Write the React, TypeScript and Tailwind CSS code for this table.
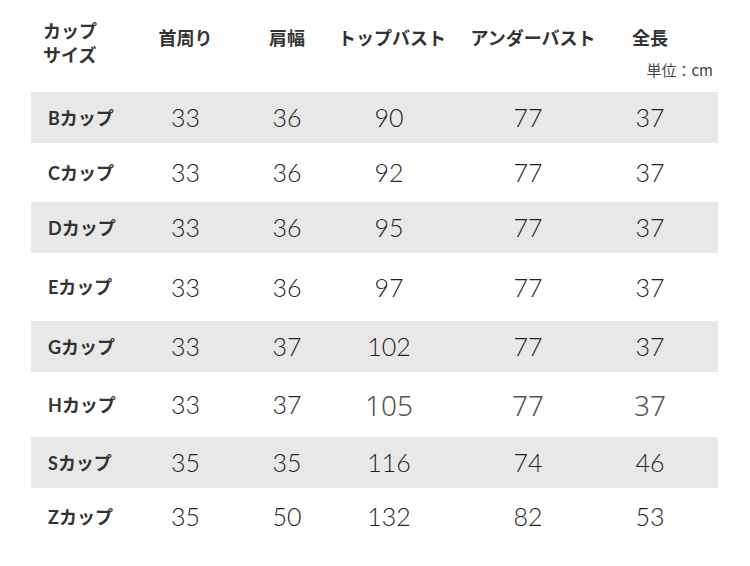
const cols = "grid grid-cols-[104px_101px_102px_102px_176px_68px_1fr]";

type Row = {
  cup: string;
  values: string[];
  shaded: boolean;
  height: string;
  alt?: boolean;
};

const rows: Row[] = [
  { cup: "B", values: ["33", "36", "90", "77", "37"], shaded: true, height: "h-[51px]" },
  { cup: "C", values: ["33", "36", "92", "77", "37"], shaded: false, height: "h-[59px]" },
  { cup: "D", values: ["33", "36", "95", "77", "37"], shaded: true, height: "h-[51px]" },
  { cup: "E", values: ["33", "36", "97", "77", "37"], shaded: false, height: "h-[68px]" },
  { cup: "G", values: ["33", "37", "102", "77", "37"], shaded: true, height: "h-[51px]" },
  { cup: "H", values: ["33", "37", "105", "77", "37"], shaded: false, height: "h-[65px]", alt: true },
  { cup: "S", values: ["35", "35", "116", "74", "46"], shaded: true, height: "h-[51px]" },
  { cup: "Z", values: ["35", "50", "132", "82", "53"], shaded: false, height: "h-[57px]" },
];

const jp = "font-['Noto_Sans_CJK_JP','Noto_Sans',sans-serif]";

export default function App() {
  return (
    <div className="w-[750px] h-[566px] bg-white overflow-hidden">
      <div className="ml-[31px] w-[687px] pt-[15px]">
        {/* header */}
        <div
          className={`${cols} grid-rows-[44px] h-[44px] items-center whitespace-nowrap text-[18px] font-bold text-[#333] ${jp}`}
        >
          <div className="self-start mt-[3px] pl-[12px] leading-[24px]">
            <div>カップ</div>
            <div>サイズ</div>
          </div>
          <div className="text-center">首周り</div>
          <div className="text-center">肩幅</div>
          <div className="text-center">トップバスト</div>
          <div className="text-center pl-[10px]">アンダーバスト</div>
          <div className="text-center">全長</div>
          <div />
        </div>
        <div
          className={`mt-[1px] mb-[12px] h-[20px] leading-[20px] text-right pr-[5px] text-[15px] text-[#444] ${jp}`}
        >
          単位：cm
        </div>

        {/* body */}
        {rows.map((r) => (
          <div
            key={r.cup}
            className={`${cols} ${r.height} items-center ${r.shaded ? "bg-[#e8e8e8]" : ""}`}
          >
            <div className={`pl-[17px] text-[18px] font-bold text-[#333] ${jp}`}>
              <span className="font-['Lato',sans-serif] font-bold">{r.cup}</span>カップ
            </div>
            {r.values.map((v, i) => (
              <div
                key={i}
                className={
                  r.alt && i >= 2
                    ? "text-center text-[28px] leading-none font-['Noto_Sans',sans-serif] font-light text-[#555]"
                    : "text-center text-[25px] leading-none font-['Lato',sans-serif] font-light text-[#222]"
                }
              >
                {v}
              </div>
            ))}
            <div />
          </div>
        ))}
      </div>
    </div>
  );
}
